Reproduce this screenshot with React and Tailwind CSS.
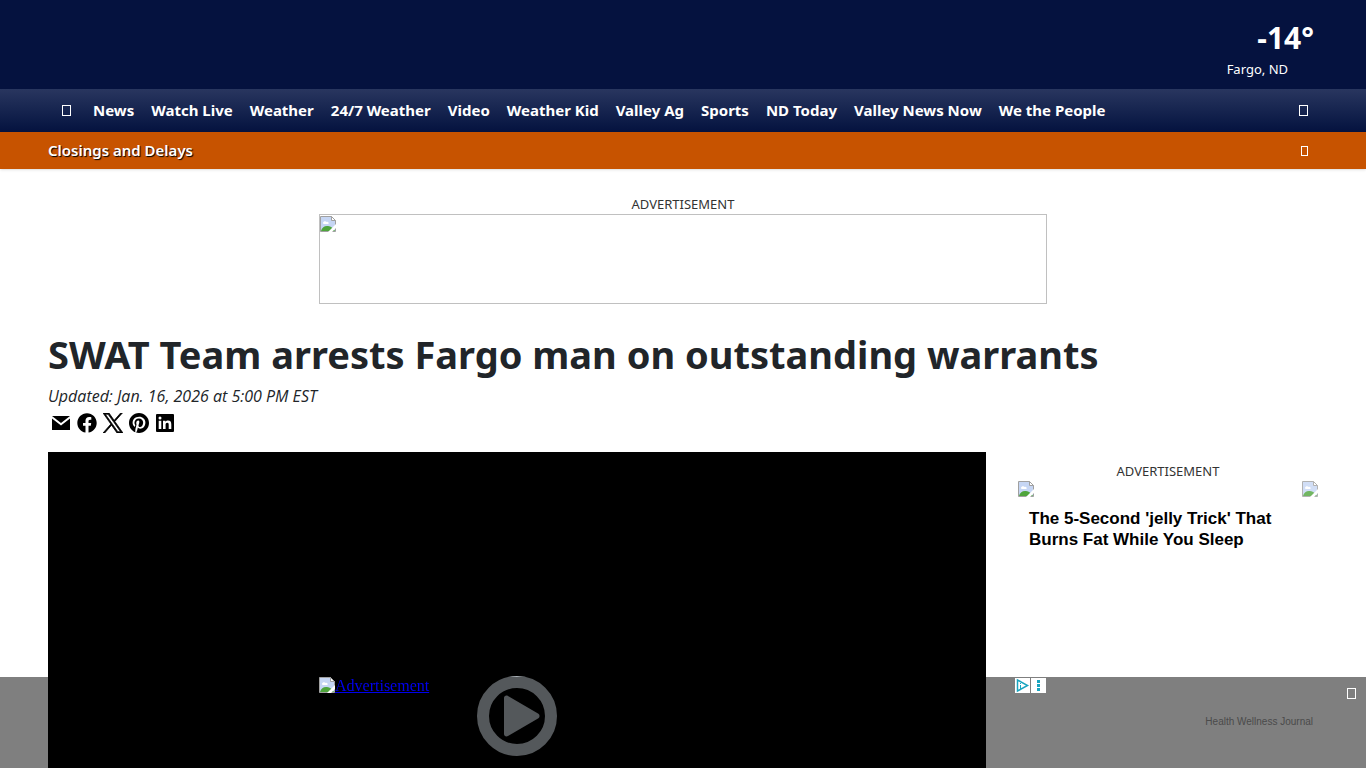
import { FaFacebook } from "react-icons/fa";

const navLinks = [
  "News",
  "Watch Live",
  "Weather",
  "24/7 Weather",
  "Video",
  "Weather Kid",
  "Valley Ag",
  "Sports",
  "ND Today",
  "Valley News Now",
  "We the People",
];

const shareLinks = [
  { name: "Email", icon: <MailIcon /> },
  { name: "Facebook", icon: <FaFacebook className="h-5 w-5" /> },
  { name: "X", icon: <XIcon /> },
  { name: "Pinterest", icon: <PinterestIcon /> },
  { name: "LinkedIn", icon: <LinkedInIcon /> },
];

function MailIcon() {
  return (
    <svg viewBox="0 0 20 20" className="h-5 w-5" fill="currentColor">
      <path d="M1 3h18l-9 7z" />
      <path d="M1 5.5l9 7 9-7V17H1z" />
    </svg>
  );
}

function XIcon() {
  return (
    <svg viewBox="1 1 22 22" className="h-5 w-5" fill="currentColor">
      <path
        d="M14.1 10.3 22.3 1h-1.9l-7.1 8.1L7.6 1H1l8.6 12.2L1 23h1.9l7.5-8.6 6 8.6H23zm-2.7 3-.9-1.2L3.6 2.4h3l5.6 7.8.9 1.2 7.2 10.2h-3z"
        stroke="currentColor"
        strokeWidth="0.8"
      />
    </svg>
  );
}

function PinterestIcon() {
  return (
    <svg viewBox="0 8 496 496" className="h-5 w-5" fill="currentColor">
      <path d="M496 256c0 137-111 248-248 248-25.600 0-50.200-3.900-73.400-11.100 10.100-16.500 25.200-43.500 30.800-65 3-11.600 15.400-59 15.400-59 8.100 15.400 31.700 28.500 56.800 28.500 74.800 0 128.700-68.800 128.700-154.300 0-81.900-66.900-143.200-152.900-143.200-107 0-163.900 71.800-163.900 150.100 0 36.400 19.400 81.700 50.300 96.100 4.700 2.200 7.200 1.200 8.300-3.300.8-3.400 5-20.300 6.900-28.100.6-2.500.3-4.700-1.700-7.100-10.100-12.500-18.300-35.300-18.300-56.600 0-54.700 41.400-107.600 112-107.600 60.900 0 103.600 41.500 103.600 100.900 0 67.100-33.900 113.600-78 113.600-24.300 0-42.600-20.100-36.700-44.800 7-29.500 20.500-61.300 20.500-82.600 0-19-10.200-34.900-31.400-34.900-24.900 0-44.900 25.700-44.900 60.200 0 22 7.400 36.800 7.400 36.800s-24.500 103.800-29 123.200c-5 21.400-3 51.600-.9 71.200C65.400 450.900 0 361.100 0 256 0 119 111 8 248 8s248 111 248 248z" />
    </svg>
  );
}

function LinkedInIcon() {
  return (
    <svg viewBox="0 0 20 20" className="h-5 w-5">
      <rect x="1" y="1" width="18" height="18" rx="1" />
      <g fill="#fff">
        <circle cx="5" cy="5" r="1.5" />
        <path d="M3.700 7.700h2.600V16H3.700zM8 7.700h2.500v1.200c.5-.9 1.400-1.400 2.600-1.400 2.500 0 3.200 1.600 3.200 3.900V16h-2.600v-4.200c0-1.200-.2-2.100-1.400-2.100s-1.700.9-1.700 2.100V16H8z" />
      </g>
    </svg>
  );
}

function BrokenImage({ className = "" }) {
  return (
    <svg viewBox="0 0 16 16" className={`h-4 w-4 shrink-0 ${className}`}>
      <path d="M0.500 0.500h11l4 4v11h-15z" fill="#c6d6f4" stroke="#a0a0a0" />
      <path d="M3 7c0-2 3-2.500 3.500-1C8 5.500 9 6.500 8.500 8H3.500z" fill="#fff" />
      <path d="M1 15c1-4 4-5.500 7-5 3 .5 5 2 7 5z" fill="#4fa53c" />
      <path d="M11.500 0.500v4h4z" fill="#fff" stroke="#a0a0a0" />
      <path d="M8 16 16 8v4l-4 4z" fill="#fff" />
    </svg>
  );
}

function Glyph({ className = "h-[11px] w-[9px]" }) {
  return <span className={`block border border-white ${className}`} />;
}

function AdLabel() {
  return <p className="text-center text-[13px] leading-5 text-[#333]">ADVERTISEMENT</p>;
}

function Header() {
  return (
    <header>
      <div className="flex h-[89px] justify-end bg-[#05123f] px-12 text-white">
        <div className="flex flex-col items-end pt-4">
          <p className="mr-1 text-[30px] leading-[44px] font-bold">-14°</p>
          <p className="mr-[30px] text-[13px] leading-[18px]">Fargo, ND</p>
        </div>
      </div>

      <nav className="flex h-[43px] items-center bg-linear-to-b from-[#29365f] to-[#05123f] px-12 text-[15px] font-bold text-white">
        <a href="#" aria-label="Home" className="px-3.5">
          <Glyph />
        </a>
        <ul className="ml-2 flex flex-1 gap-[17px] whitespace-nowrap">
          {navLinks.map((link) => (
            <li key={link}>
              <a href="#">{link}</a>
            </li>
          ))}
        </ul>
        <button aria-label="Search" className="mr-2.5">
          <Glyph />
        </button>
      </nav>

      <div className="flex h-[37px] items-center justify-between bg-[#c75300] px-12 text-white shadow-sm">
        <a href="#" className="text-[15px] font-semibold text-shadow-[1px_1px_1px_#000]">
          Closings and Delays
        </a>
        <button aria-label="Close alert" className="mr-2.5">
          <Glyph className="h-[10px] w-[7px]" />
        </button>
      </div>
    </header>
  );
}

function VideoPlayer() {
  return (
    <div className="flex aspect-video min-w-0 flex-1 items-center justify-center bg-black">
      <button aria-label="Play video">
        <svg viewBox="0 0 80 80" className="h-20 w-20" fill="#a9b0b6">
          <circle cx="40" cy="40" r="34" fill="none" stroke="#a9b0b6" strokeWidth="12" />
          <path d="M27 22c0-2 2-3 4-2l30 17.500c2 1 2 4 0 5L31 60c-2 1-4 0-4-2z" />
        </svg>
      </button>
    </div>
  );
}

function Sidebar() {
  return (
    <aside className="w-[300px] shrink-0 pt-[9px]">
      <AdLabel />
      <div className="flex justify-between">
        <BrokenImage />
        <BrokenImage className="opacity-80" />
      </div>
      <a
        href="#"
        className="mt-[11px] block pr-8 pl-[11px] font-['Liberation_Sans',Arial,sans-serif] text-[17px] leading-[21px] font-bold text-black"
      >
        The 5-Second 'jelly Trick' That Burns Fat While You Sleep
      </a>
      <p className="mt-[164px] mr-[5px] text-right font-['Liberation_Sans',Arial,sans-serif] text-[10px] leading-4 text-[#969696]">
        Health Wellness Journal
      </p>
    </aside>
  );
}

function StickyAd() {
  return (
    <div className="fixed inset-x-0 bottom-0 h-[91px] bg-black/50">
      <div className="mx-auto flex w-[728px] items-start justify-between">
        <a
          href="#"
          className="flex font-['Liberation_Serif','Times_New_Roman',serif] text-base leading-[18px] text-[#0000ee] underline"
        >
          <BrokenImage />
          Advertisement
        </a>
        <div className="mt-px mr-px flex gap-px">
          <button aria-label="Ad choices" className="bg-white">
            <svg viewBox="0 0 15 15" className="h-[15px] w-[15px]" fill="none" stroke="#19a5c0" strokeWidth="1.500">
              <path d="M2.500 2v11l10-5.500z" />
              <path d="M5.500 7v4M5.500 5v1" strokeWidth="1" />
            </svg>
          </button>
          <button aria-label="Ad options" className="bg-white">
            <svg viewBox="0 0 15 15" className="h-[15px] w-[15px]" fill="#19a5c0">
              <path d="M6 2h3v3H6zM6 6h3v3H6zM6 10h3v3H6z" />
            </svg>
          </button>
        </div>
      </div>
      <button aria-label="Close ad" className="absolute top-[11px] right-[10px]">
        <Glyph />
      </button>
    </div>
  );
}

export default function App() {
  return (
    <div className="h-screen overflow-hidden bg-white font-['Noto_Sans','Open_Sans',sans-serif] text-[#212529]">
      <Header />

      <main className="px-12">
        <div className="pt-[25px]">
          <AdLabel />
          <div className="mx-auto h-[90px] max-w-[728px] border border-[#c0c0c0]">
            <BrokenImage className="mt-px" />
          </div>
        </div>

        <h1 className="mt-[26px] text-[38px] leading-[48px] font-bold">
          SWAT Team arrests Fargo man on outstanding warrants
        </h1>
        <p className="mt-1.5 font-['Open_Sans',sans-serif] text-base leading-6 italic">
          Updated: Jan. 16, 2026 at 5:00 PM EST
        </p>

        <ul className="mt-0.5 flex text-black">
          {shareLinks.map((link) => (
            <li key={link.name}>
              <a href="#" aria-label={link.name} className="flex h-[26px] w-[26px] items-center justify-center">
                {link.icon}
              </a>
            </li>
          ))}
        </ul>

        <div className="mt-4 flex items-start gap-8">
          <VideoPlayer />
          <Sidebar />
        </div>
      </main>

      <StickyAd />
    </div>
  );
}
